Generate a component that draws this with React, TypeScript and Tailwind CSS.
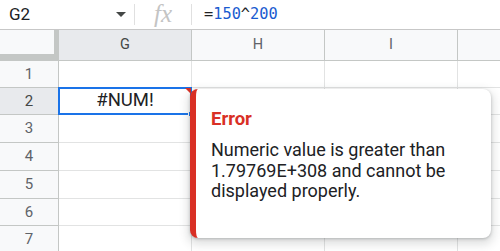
import React from "react";

const rowHeights = [27, 27, 28, 28, 28, 27, 28];

export default function App() {
  return (
    <div className="relative w-[500px] h-[251px] overflow-hidden bg-white font-['Roboto',sans-serif]">
      {/* Formula bar */}
      <div className="flex h-[30px] items-center border-b border-[#c7c7c7]">
        <div className="flex w-[134px] items-center justify-between pl-[9px] pr-[8px]">
          <span className="text-[17px] text-[#202124]">G2</span>
          <svg width="10" height="5" viewBox="0 0 10 5">
            <path d="M0 0 L10 0 L5 5 Z" fill="#444746" />
          </svg>
        </div>
        <div className="h-[21px] w-px bg-[#e0e0e0]" />
        <div className="flex w-[56px] items-center justify-center">
          <span className="font-['Liberation_Serif',serif] text-[25px] italic leading-none text-[#c4c4c4] -mt-[2px]">
            fx
          </span>
        </div>
        <div className="h-[21px] w-px bg-[#e0e0e0]" />
        <div className="pl-[12px] font-['DejaVu_Sans_Mono',monospace] text-[15.3px] text-[#202124]">
          =<span className="text-[#1a5bd0]">150</span>^<span className="text-[#1a5bd0]">200</span>
        </div>
      </div>

      {/* Column header row */}
      <div className="flex h-[31px]">
        <div className="h-full w-[59px] shrink-0 border-r-[5px] border-b-[7px] border-[#c4c7c5] bg-[#f8f9fa]" />
        <div className="flex w-[133px] shrink-0 items-center justify-center border-r border-b border-[#c4c7c5] bg-[#e8eaed] text-[14.5px] text-[#444746]">
          G
        </div>
        <div className="flex w-[133px] shrink-0 items-center justify-center border-r border-b border-[#c4c7c5] bg-[#f8f9fa] text-[14.5px] text-[#5f6368]">
          H
        </div>
        <div className="flex w-[133px] shrink-0 items-center justify-center border-r border-b border-[#c4c7c5] bg-[#f8f9fa] text-[14.5px] text-[#5f6368]">
          I
        </div>
        <div className="flex-1 border-b border-[#c4c7c5] bg-[#f8f9fa]" />
      </div>

      {/* Rows */}
      {rowHeights.map((h, i) => {
        const n = i + 1;
        const sel = n === 2;
        return (
          <div key={n} className="flex" style={{ height: h }}>
            <div
              className={
                sel
                  ? "flex w-[59px] shrink-0 items-center justify-center border-r border-b border-[#c4c7c5] bg-[#e8eaed] text-[15px] text-[#444746]"
                  : "flex w-[59px] shrink-0 items-center justify-center border-r border-b border-[#c4c7c5] bg-[#f8f9fa] text-[15px] text-[#5f6368]"
              }
            >
              {n}
            </div>
            <div className="relative flex w-[133px] shrink-0 items-center justify-center border-r border-b border-[#e2e3e3]">
              {sel && (
                <>
                  <span className="text-[18.5px] text-[#202124]">#NUM!</span>
                  <div className="absolute -left-px -top-px -right-px -bottom-px border-2 border-[#1a73e8]" />
                  <svg className="absolute right-0 top-0" width="6" height="6" viewBox="0 0 6 6">
                    <path d="M0 0 L6 0 L6 6 Z" fill="#d93025" />
                  </svg>
                  <div className="absolute -bottom-[3px] -right-[3px] h-[6px] w-[6px] border border-white bg-[#1a73e8]" />
                </>
              )}
            </div>
            <div className="w-[133px] shrink-0 border-r border-b border-[#e2e3e3]" />
            <div className="w-[133px] shrink-0 border-r border-b border-[#e2e3e3]" />
            <div className="flex-1 border-b border-[#e2e3e3]" />
          </div>
        );
      })}

      {/* Error tooltip */}
      <div className="absolute left-[190px] top-[89px] h-[149px] w-[301px] rounded-[8px] border-l-[6px] border-[#d93025] bg-white pl-[15px] pr-[10px] pt-[19px] shadow-[0_1px_3px_rgba(60,64,67,0.3),0_4px_8px_3px_rgba(60,64,67,0.15)]">
        <div className="text-[18.5px] font-bold leading-[22px] text-[#d93025]">Error</div>
        <div className="mt-[10px] text-[18px] leading-[20.5px] text-[#202124]">
          Numeric value is greater than
          <br />
          1.79769E+308 and cannot be
          <br />
          displayed properly.
        </div>
      </div>
    </div>
  );
}
